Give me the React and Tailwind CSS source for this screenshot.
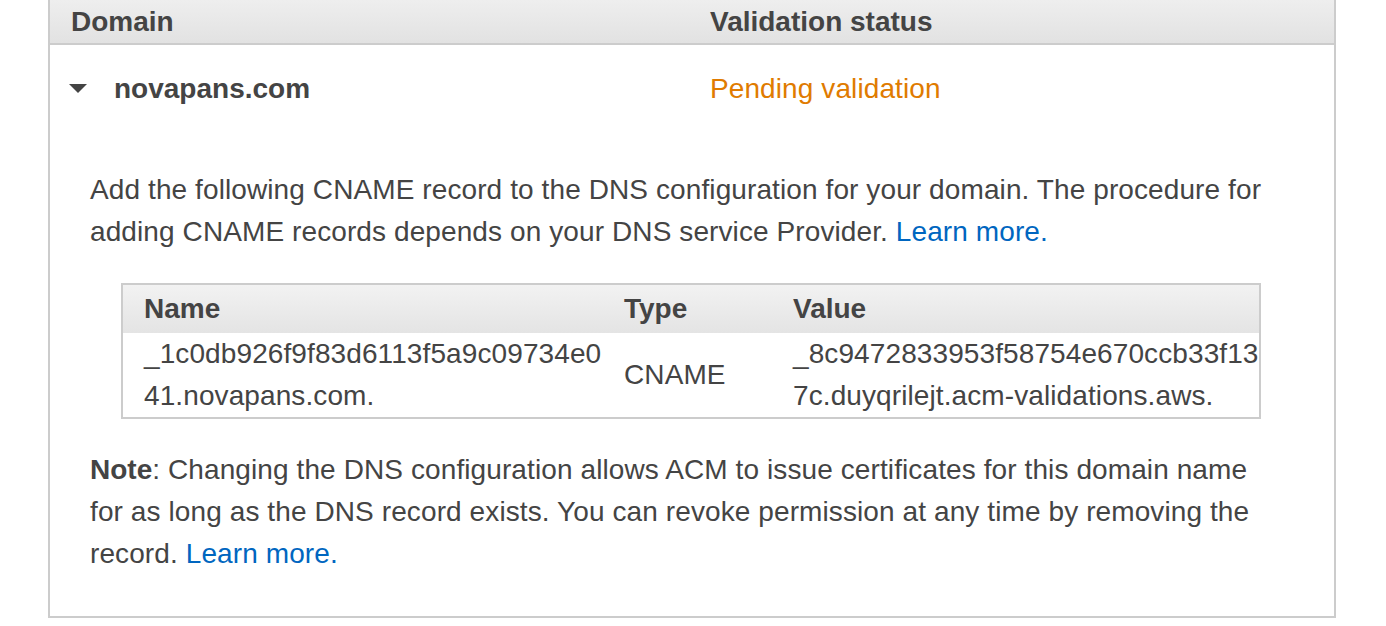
export default function App() {
  const font = { fontFamily: '"Liberation Sans", Arial, sans-serif' };
  return (
    <div className="w-[1386px] h-[626px] bg-white overflow-hidden text-[#444]" style={font}>
      <div className="ml-[48px] w-[1288px] border-2 border-t-0 border-[#cccccc]">
        {/* header */}
        <div className="flex h-[45px] items-center bg-gradient-to-b from-[#eeeeee] to-[#e2e2e2] border-b-2 border-[#cccccc] text-[28px] font-bold leading-none">
          <div className="w-[638px] shrink-0 pl-[21px]">Domain</div>
          <div className="pl-[22px]">Validation status</div>
        </div>

        {/* domain row */}
        <div className="flex pt-[23px] text-[28px] leading-[42px]">
          <div className="w-[638px] shrink-0 flex items-center pl-[19px]">
            <svg width="18" height="10" viewBox="0 0 18 10" className="mr-[27px]">
              <path d="M0 0 H18 L9 9 Z" fill="#444" />
            </svg>
            <span className="font-bold">novapans.com</span>
          </div>
          <div className="pl-[22px] text-[#e07b00] tracking-[0.1px]">Pending validation</div>
        </div>

        {/* details */}
        <div className="pl-[40px] pr-[20px] pt-[59px] pb-[41px] text-[28px] leading-[42px] tracking-[0.1px] whitespace-nowrap">
          <p>
            Add the following CNAME record to the DNS configuration for your domain. The procedure for
            <br />
            adding CNAME records depends on your DNS service Provider.{' '}
            <a className="text-[#0066c0]">Learn more.</a>
          </p>

          <div className="mt-[30px] ml-[31px] w-[1140px] border-2 border-[#cccccc]">
            <div className="flex h-[48px] items-center bg-gradient-to-b from-[#f2f2f2] to-[#e4e4e4] font-bold tracking-normal">
              <div className="w-[480px] shrink-0 pl-[21px]">Name</div>
              <div className="w-[169px] shrink-0 pl-[21px]">Type</div>
              <div className="flex-1 pl-[21px]">Value</div>
            </div>
            <div className="flex items-center">
              <div className="w-[480px] shrink-0 pl-[21px]">
                _1c0db926f9f83d6113f5a9c09734e0
                <br />
                41.novapans.com.
              </div>
              <div className="w-[169px] shrink-0 pl-[21px]">CNAME</div>
              <div className="flex-1 pl-[21px]">
                _8c9472833953f58754e670ccb33f13
                <br />
                7c.duyqrilejt.acm-validations.aws.
              </div>
            </div>
          </div>

          <p className="mt-[30px]">
            <span className="font-bold tracking-normal">Note</span>: Changing the DNS configuration allows ACM to issue certificates for this domain name
            <br />
            for as long as the DNS record exists. You can revoke permission at any time by removing the
            <br />
            record. <a className="text-[#0066c0]">Learn more.</a>
          </p>
        </div>
      </div>
    </div>
  );
}
